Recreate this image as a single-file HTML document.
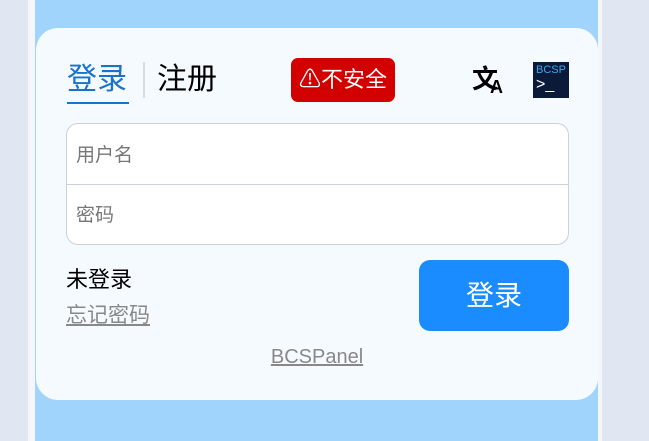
<!DOCTYPE html>
<html><head><meta charset="utf-8"><style>
body{margin:0;width:649px;height:441px;background:#e0e6f2;position:relative;overflow:hidden;font-family:"Liberation Sans","Noto Sans CJK SC",sans-serif}
.col{position:absolute;left:28px;top:0;width:574px;height:441px;background:#f4f6fb}
.blue{position:absolute;left:35px;top:0;width:563px;height:441px;background:#a0d4fc}
.card{position:absolute;left:36px;top:28px;width:562px;height:372px;background:#f5faff;border-radius:22px}
.abs{position:absolute}
</style></head><body>
<div class="col"></div><div class="blue"></div>
<div class="card"></div>
<div class="abs" style="left:67px;top:60px;font-size:30px;color:#1a73c8;line-height:40px">登录</div>
<div class="abs" style="left:67px;top:102px;width:62px;height:2px;background:#1a73c8"></div>
<div class="abs" style="left:143px;top:62px;width:2px;height:36px;background:#d8dce4"></div>
<div class="abs" style="left:157px;top:60px;font-size:30px;color:#000;line-height:40px">注册</div>
<div class="abs" style="left:291px;top:58px;width:104px;height:44px;background:#d30000;border-radius:7px;color:#fff;font-size:22px;line-height:44px;text-align:center">⚠不安全</div>
<div class="abs" style="left:472px;top:64px;font-size:26px;font-weight:bold;line-height:30px">文<span style="font-size:18px;margin-left:-8px;position:relative;top:5px">A</span></div>
<div class="abs" style="left:533px;top:62px;width:36px;height:36px;background:#0c1a3a;color:#3aa8f0;font-size:11px;line-height:11px;font-family:'Liberation Sans',sans-serif;padding:3px 0 0 3px;box-sizing:border-box">BCSP<div style="color:#fff;font-size:16px;line-height:16px;margin-top:1px">&gt;_</div></div>
<div class="abs" style="left:66px;top:123px;width:501px;height:120px;border:1px solid #ccd0d8;border-radius:12px;background:#fff"></div>
<div class="abs" style="left:67px;top:184px;width:501px;height:1px;background:#ccd0d8"></div>
<div class="abs" style="left:76px;top:143px;font-size:19px;color:#777;line-height:26px">用户名</div>
<div class="abs" style="left:76px;top:203px;font-size:19px;color:#777;line-height:26px">密码</div>
<div class="abs" style="left:66px;top:265px;font-size:22px;line-height:30px">未登录</div>
<div class="abs" style="left:66px;top:302px;font-size:21px;line-height:28px;color:#888;text-decoration:underline">忘记密码</div>
<div class="abs" style="left:419px;top:260px;width:150px;height:71px;background:#1a8cff;border-radius:11px;color:#fff;font-size:28px;line-height:71px;text-align:center">登录</div>
<div class="abs" style="left:0;width:634px;top:344px;text-align:center;font-size:20px;line-height:26px;color:#888;text-decoration:underline">BCSPanel</div>
</body></html>
